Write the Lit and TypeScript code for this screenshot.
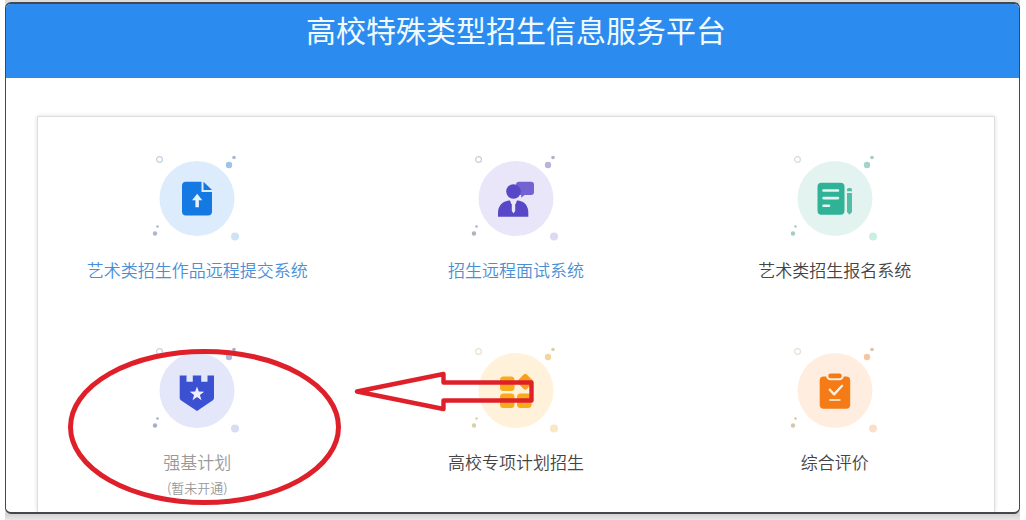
import { LitElement, html, svg, css, nothing, type TemplateResult, type SVGTemplateResult } from "lit";
import { customElement } from "lit/decorators.js";
import { classMap } from "lit/directives/class-map.js";

interface Service {
  name: string;
  note?: string;
  state: "open" | "plain" | "closed";
  tone: string;
  glyph: SVGTemplateResult;
  mark?: "ring" | "arrow";
}

const uploadGlyph = svg`
  <path fill="#1579e4" d="M34 28.3h15.5v10.2H60V58a4 4 0 0 1-4 4H34a4 4 0 0 1-4-4V32.3a4 4 0 0 1 4-4z"/>
  <path fill="#1579e4" d="M51.500 28.300L60 36.500h-8.500z"/>
  <path fill="#e4f2fe" d="M45.200 40.300l5.100 6.400h-3.400v7h-3.500v-7h-3.400z"/>`;

const interviewGlyph = svg`
  <path fill="#7263d0" d="M48 28.300h12a3 3 0 0 1 3 3v7.200a3 3 0 0 1-3 3h-6.500l-3.300 2.700v-2.700H48a3 3 0 0 1-3-3v-7.200a3 3 0 0 1 3-3z"/>
  <circle fill="#5748c8" cx="42.500" cy="38" r="7.300"/>
  <path fill="#5748c8" d="M27 63.200V59c0-6.600 4.600-11.400 11-12h9c6.400.6 10.300 5.400 10.300 12v4.200z"/>
  <path fill="#e9e6f8" d="M38.800 46.300h7.400l-1.500 4.200h-4.400z"/>
  <path fill="#e9e6f8" d="M40.800 49.500h3.400v8l-1.700 2.600-1.700-2.600z"/>`;

const formGlyph = svg`
  <rect fill="#2fb295" x="27.500" y="29.300" width="27" height="32" rx="4"/>
  <path stroke="#e4f5f1" stroke-width="2.600" stroke-linecap="round" d="M33.500 37h14.500M33.500 44.600h14.500M33.500 52.200h5.500"/>
  <path fill="#55bda6" d="M57 36.200a1.600 1.600 0 0 1 1.600-1.600h1.800a1.600 1.600 0 0 1 1.600 1.600v1.600h-5zM57 39.500h5v19l-2.500 2.800-2.500-2.800z"/>`;

const castleGlyph = svg`
  <path fill="#3c50d2" d="M27.700 30h6.800v6.300h6.300V30h8.400v6.300h6.300V30H62v22.200c0 1.200-.5 2-1.500 2.700L45 65.600 29.200 54.900c-1-.7-1.500-1.500-1.500-2.700z"/>
  <path fill="#eef0ff" d="M45 41l1.800 5.100 5.400.1-4.300 3.300 1.600 5.200L45 51.600l-4.500 3.100 1.600-5.200-4.300-3.300 5.400-.1z"/>`;

const blocksGlyph = svg`
  <rect fill="#f8ab1b" x="29" y="31" width="14.500" height="14.500" rx="3.500"/>
  <rect fill="#f8ab1b" x="29" y="48" width="14.500" height="14.500" rx="3.500"/>
  <rect fill="#f8ab1b" x="46" y="48" width="14.500" height="14.500" rx="3.500"/>
  <rect fill="#f9a01b" x="48" y="30" width="12.500" height="12.500" rx="2.500" transform="rotate(45 54.250 36.250)"/>`;

const clipboardGlyph = svg`
  <rect fill="#f47b16" x="29.700" y="31" width="30.500" height="32.300" rx="4"/>
  <rect fill="#f47b16" stroke="#ffefe0" stroke-width="2" x="37.200" y="27" width="15.600" height="6.800" rx="3.400"/>
  <path fill="none" stroke="#fff1e2" stroke-width="2.300" stroke-linecap="round" stroke-linejoin="round" d="M39.800 44.200l4.300 4.700 8-8.600"/>
  <path stroke="#fdd9b4" stroke-width="2" stroke-linecap="round" d="M40 54.600h9.700"/>`;

const services: Service[] = [
  { name: "艺术类招生作品远程提交系统", state: "open", tone: "blue", glyph: uploadGlyph },
  { name: "招生远程面试系统", state: "open", tone: "violet", glyph: interviewGlyph },
  { name: "艺术类招生报名系统", state: "plain", tone: "green", glyph: formGlyph },
  { name: "强基计划", note: "(暂未开通)", state: "closed", tone: "indigo", glyph: castleGlyph, mark: "ring" },
  { name: "高校专项计划招生", state: "plain", tone: "amber", glyph: blocksGlyph, mark: "arrow" },
  { name: "综合评价", state: "plain", tone: "orange", glyph: clipboardGlyph },
];

@customElement("app-root")
export class AppRoot extends LitElement {
  static styles = css`
    :host {
      display: block;
      padding: 0 6px 0 5px;
      background: #fff;
      font-family: "Noto Sans CJK SC", sans-serif;
      font-weight: 350;
    }
    .backdrop {
      padding: 2px 0 6px;
      background: linear-gradient(to top, #e8e8e8, #d2d2d2 6px, #dcdcdc 7px);
    }
    .frame {
      border: solid #44484d;
      border-width: 2px 1px;
      border-radius: 6px;
      background: #fff;
      overflow: hidden;
    }
    .banner {
      padding: 3px 24px 27px 31px;
      background: #2b8bef;
      color: #f0fbff;
      text-align: center;
    }
    .title {
      margin: 0;
      font-size: 30px;
      line-height: 44px;
      font-weight: 400;
    }
    .content {
      padding: 38px 24px 0 31px;
    }
    .card {
      display: grid;
      grid-template-columns: repeat(3, minmax(0, 1fr));
      row-gap: 64px;
      padding: 37px 0 14px;
      border: solid #dedede;
      border-width: 1px 1px 0;
      box-shadow: 0 0 4px rgba(0, 0, 0, 0.14);
    }
    .tile {
      position: relative;
      display: flex;
      flex-direction: column;
      align-items: center;
      text-align: center;
      text-decoration: none;
      color: #444;
    }
    .open { color: #4a8fd6; }
    .closed { color: #999; }
    .icon {
      width: 90px;
      height: 90px;
      margin-bottom: 14px;
      overflow: visible;
    }
    .name {
      font-size: 17px;
      line-height: 24px;
    }
    .note {
      margin-top: 4px;
      font-size: 13px;
      line-height: 20px;
    }
    .blue { --disc: #dcecfc; --dot: #9cc3ec; --far: #cfe3f7; --ring: #c3cfe2; --tiny: #a6b9d3; }
    .violet { --disc: #e8e6f8; --dot: #b9b4da; --far: #dcd9f3; --ring: #cbcbd6; --tiny: #b3b0c6; }
    .green { --disc: #e3f4f0; --dot: #a5d3cb; --far: #c9eee2; --ring: #cfdedd; --tiny: #a5cbc5; }
    .indigo { --disc: #e4e6f9; --dot: #b0b6dc; --far: #d9dcf3; --ring: #cccfdd; --tiny: #a7adcd; }
    .amber { --disc: #fff1da; --dot: #f3d59b; --far: #fbe7c3; --ring: #e6e2ca; --tiny: #d9d2a5; }
    .orange { --disc: #ffeedf; --dot: #f5c6a0; --far: #fbdfcb; --ring: #e6e0d2; --tiny: #d6c5ae; }
    .disc { fill: var(--disc); }
    .dot { fill: var(--dot); }
    .far { fill: var(--far); }
    .tiny { fill: var(--tiny); }
    .hollow { fill: none; stroke: var(--ring); stroke-width: 1.2; }
    .mark {
      position: absolute;
      left: 50%;
      fill: none;
      stroke: #df202a;
      pointer-events: none;
    }
    .ring {
      top: 2px;
      width: 276px;
      height: 158px;
      margin-left: -131px;
      stroke-width: 5;
    }
    .arrow {
      top: 22px;
      width: 184px;
      height: 48px;
      margin-left: -164px;
      stroke-width: 4.4;
      stroke-linejoin: round;
    }
  `;

  private renderMark(mark: Service["mark"]) {
    if (mark === "ring") {
      return html`<svg class="mark ring" viewBox="0 0 276 158" aria-hidden="true">
        <ellipse cx="138.500" cy="79" rx="134" ry="75.500" /></svg>`;
    }
    if (mark === "arrow") {
      return html`<svg class="mark arrow" viewBox="0 0 184 48" aria-hidden="true">
        <path d="M5 23.500L91.500 6v8.500h88v18h-88v8.500z" /></svg>`;
    }
    return nothing;
  }

  private renderService(s: Service): TemplateResult {
    const body = html`
      <svg class="icon ${s.tone}" viewBox="0 0.500 90 90" aria-hidden="true">
        <circle class="disc" cx="45" cy="45" r="37.500" />
        <circle class="hollow" cx="7.500" cy="6" r="2.900" />
        <circle class="dot" cx="77" cy="11.500" r="3.200" />
        <circle class="tiny" cx="82" cy="4" r="1.800" />
        <circle class="tiny" cx="3" cy="80" r="2.200" />
        <circle class="tiny" cx="5.500" cy="73" r="1.300" />
        <circle class="far" cx="83" cy="83" r="4" />
        ${s.glyph}
      </svg>
      <span class="name">${s.name}</span>
      ${s.note ? html`<span class="note">${s.note}</span>` : nothing}
      ${this.renderMark(s.mark)}`;
    const classes = classMap({ tile: true, [s.state]: true });
    return s.state === "closed"
      ? html`<div class=${classes}>${body}</div>`
      : html`<a class=${classes} href="#">${body}</a>`;
  }

  render() {
    return html`
      <div class="backdrop">
        <div class="frame">
          <header class="banner"><h1 class="title">高校特殊类型招生信息服务平台</h1></header>
          <main class="content">
            <nav class="card">${services.map((s) => this.renderService(s))}</nav>
          </main>
        </div>
      </div>`;
  }
}
